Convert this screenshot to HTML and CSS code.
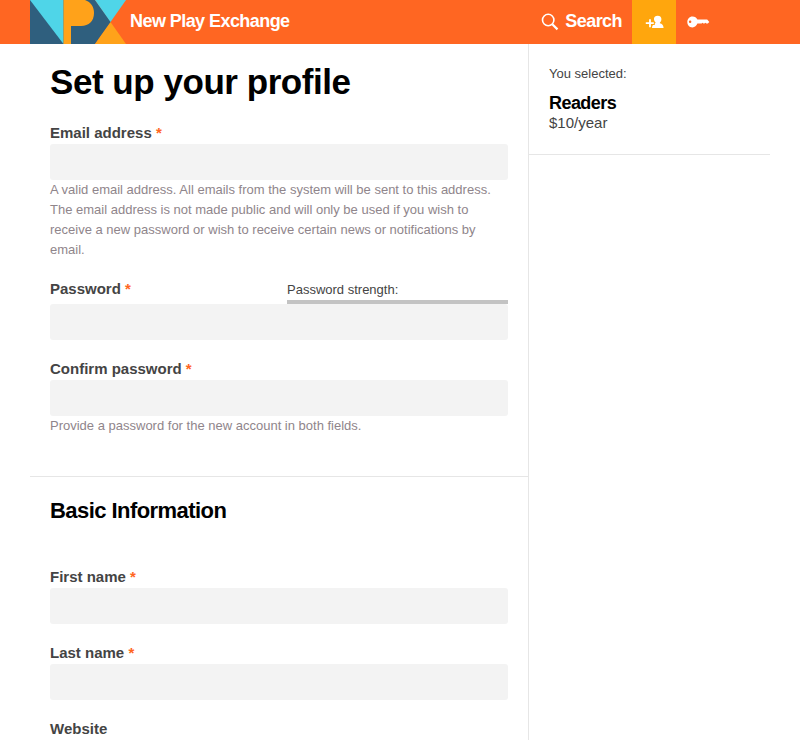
FILE: index.html
```html
<!DOCTYPE html>
<html lang="en">
<head>
<meta charset="utf-8">
<title>New Play Exchange</title>
<link rel="stylesheet" href="styles.css">
</head>
<body>
<header class="topbar">
  <a class="brand">
    <svg class="logo" width="96" height="44" viewBox="0 0 96 44">
      <path fill="#2f5f7e" d="M0 0H65L81 22L65 44H0Z"/>
      <path fill="#4fd5e8" d="M0 0H33.500V44Z"/>
      <path fill="#4fd5e8" d="M65 0H96L80.500 22Z"/>
      <path fill="#ffa21a" d="M65 44H96L80.500 22Z"/>
      <path fill="#ffa21a" d="M33.500 0H55C61 2 64 7 64 13C64 21 59 26 51 26H41V44H33.500Z"/>
    </svg>
    <span class="brand-name">New Play Exchange</span>
  </a>
  <nav class="nav">
    <a class="search">
      <svg width="18" height="18" viewBox="0 0 18 18" fill="none" stroke="#fff"><circle cx="7.200" cy="7" r="5.700" stroke-width="1.600"/><path d="M11.300 11.200L16.500 16.400" stroke-width="2.200"/></svg>
      <span>Search</span>
    </a>
    <a class="tile active">
      <svg width="20" height="16" viewBox="0 0 20 16" fill="#fff"><path d="M1.800 8.300h3.300V5.300h1.800v3h2.900v1.800H6.900v3.200H5.100v-3.200H1.800z"/><path d="M13.600 1.800c2.600 0 4 1.700 3.800 3.700-.1 1.400-.7 2.400-1.500 3v.8c2.200.6 3.500 1.500 3.700 4.700H8c.1-1.400.4-2.200 1.100-2.900h1.700V9.400l.7-.3v-.8c-2.200-1.900-2.300-6.500 2.100-6.500z"/></svg>
    </a>
    <a class="tile">
      <svg width="24" height="14" viewBox="0 0 24 14" fill="#fff"><path fill-rule="evenodd" d="M6.500 1.400c2.400 0 3.900 1.300 4.900 3h9.800L23.300 7l-1.500 1.500h-1.500l-.9-.8-1 .8h-1l-.8-.8-1 .8h-4.200c-1 2.300-2.500 3.900-5 3.900C3.200 12.400 1.300 10 1.300 7s2-5.600 5.200-5.600zM4.100 5.600a1.250 1.250 0 1 0 0 2.500 1.250 1.250 0 1 0 0-2.500z"/></svg>
    </a>
  </nav>
</header>
<div class="page">
  <main class="main">
    <section class="account">
      <h1>Set up your profile</h1>
      <div class="field">
        <label for="email">Email address <b>*</b></label>
        <input id="email" type="text">
        <p class="help">A valid email address. All emails from the system will be sent to this address. The email address is not made public and will only be used if you wish to receive a new password or wish to receive certain news or notifications by email.</p>
      </div>
      <div class="field">
        <div class="label-row">
          <label for="pass">Password <b>*</b></label>
          <div class="strength">Password strength:</div>
        </div>
        <input id="pass" type="password">
      </div>
      <div class="field">
        <label for="confirm">Confirm password <b>*</b></label>
        <input id="confirm" type="password">
        <p class="help">Provide a password for the new account in both fields.</p>
      </div>
    </section>
    <section class="basic">
      <h2>Basic Information</h2>
      <div class="field">
        <label for="first">First name <b>*</b></label>
        <input id="first" type="text">
      </div>
      <div class="field">
        <label for="last">Last name <b>*</b></label>
        <input id="last" type="text">
      </div>
      <div class="field">
        <label for="site">Website</label>
        <input id="site" type="text">
      </div>
    </section>
  </main>
  <aside class="side">
    <div class="plan">
      <p class="note">You selected:</p>
      <h3>Readers</h3>
      <p class="price">$10/year</p>
    </div>
  </aside>
</div>
</body>
</html>
```

FILE: styles.css
```css
* { box-sizing: border-box; }
html, body { height: 100%; }
body {
  margin: 0;
  overflow: hidden;
  background: #fff;
  color: #444;
  font: 15px/20px "Liberation Sans", Arial, sans-serif;
}
h1, h2, h3, p { margin: 0; }
.topbar {
  display: flex;
  justify-content: space-between;
  height: 44px;
  padding: 0 80px 0 30px;
  background: #ff6622;
  color: #fff;
  font-size: 18px;
  font-weight: bold;
  letter-spacing: -0.56px;
}
.brand, .nav, .search { display: flex; }
.logo { display: block; }
.brand-name { padding: 11px 0 0 4px; }
.search { padding: 11px 10px 0 0; gap: 6px; }
.search svg { margin-top: 2px; }
.tile { display: flex; align-items: center; justify-content: center; width: 44px; height: 44px; }
.active { background: #ffa60d; }
.page { display: flex; width: 740px; margin-left: 30px; }
.main { width: 499px; height: 696px; overflow: hidden; border-right: 1px solid #e6e6e6; }
.account { height: 433px; padding: 18px 20px 0; border-bottom: 1px solid #e6e6e6; }
h1 { height: 62px; color: #000; font-size: 35px; line-height: 40px; letter-spacing: -0.46px; }
.field { margin-bottom: 20px; }
label { display: block; height: 20px; color: #444; font-weight: bold; line-height: 18px; }
label b { color: #ff6622; }
input {
  display: block;
  width: 458px;
  height: 36px;
  margin: 0;
  padding: 0 10px;
  border: 0;
  border-radius: 3px;
  background: #f3f3f3;
}
.help { color: #8f858b; font-size: 13px; }
.label-row { display: flex; justify-content: space-between; height: 24px; }
.strength { width: 221px; height: 24px; border-bottom: 4px solid #c3c3c3; font-size: 13px; line-height: 20px; }
.basic { padding: 20px 20px 0; }
h2 { height: 71px; color: #000; font-size: 22px; line-height: 28px; letter-spacing: -0.56px; }
.side { width: 241px; }
.plan { height: 111px; padding: 20px; border-bottom: 1px solid #e6e6e6; }
.note { font-size: 13px; }
h3 { margin-top: 9px; color: #000; font-size: 18px; line-height: 20px; letter-spacing: -0.56px; }
```
